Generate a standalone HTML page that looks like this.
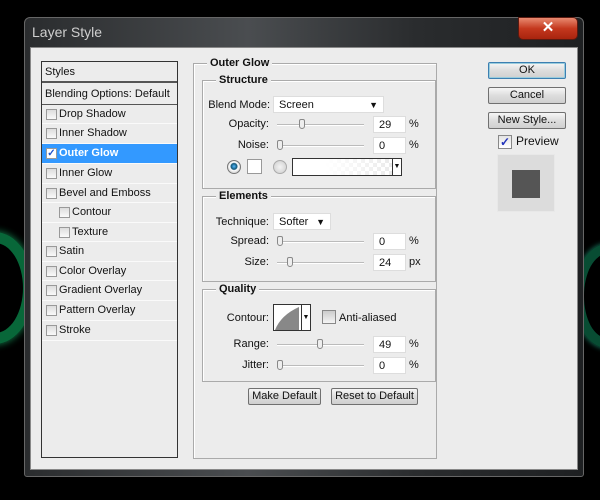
<!DOCTYPE html>
<html><head><style>
*{margin:0;padding:0;box-sizing:border-box}
body{width:600px;height:500px;background:#000;position:relative;overflow:hidden;font-family:"Liberation Sans",Tahoma,sans-serif;font-size:11px;color:#111}
.a{position:absolute}
.glowL{left:-44px;top:232px;width:78px;height:112px;border-radius:50%;border:11px solid #0a7a44;box-shadow:0 0 8px #1a9f60;opacity:.85}
.glowR{left:574px;top:244px;width:66px;height:104px;border-radius:50%;border:10px solid #0a5f40;box-shadow:0 0 6px #2a8;opacity:.8}
.frame{left:24px;top:17px;width:560px;height:460px;background:linear-gradient(90deg,#2a2c2e,#4a4d50 40%,#2a2c2e 70%,#1e2022);border:1px solid #666;border-radius:6px 6px 3px 3px}
.client{left:30px;top:47px;width:548px;height:423px;background:#ececec;border:1px solid #888}
.title{left:32px;top:24px;font-size:14px;color:#cfcfcf;font-family:"Liberation Sans",sans-serif}
.close{left:518px;top:17px;width:60px;height:23px;background:linear-gradient(#e88a70,#c4381e 50%,#a8240e);border:1px solid #5a1a10;border-radius:0 5px 5px 5px;color:#fff;text-align:center;font-weight:bold;font-size:15px;line-height:20px}
.list{left:41px;top:61px;width:137px;height:397px;border:1px solid #333;background:#ececec}
.row{position:absolute;left:0;width:135px;height:19px;border-bottom:1px solid #fafafa;line-height:18px;padding-left:17px}
.cb{position:absolute;width:11px;height:11px;border:1px solid #999;background:linear-gradient(#ddd,#fafafa);top:4px}
.fs{border:1px solid #aaa;box-shadow:1px 1px 0 #fff inset}
.lg{position:absolute;background:#ececec;font-weight:bold;padding:0 3px;font-size:11px}
.in{position:absolute;background:#fff;border:1px solid #ddd;height:17px;padding-left:5px;line-height:17px;font-size:11px}
.lbl{position:absolute;text-align:right;font-size:11px}
.sl{position:absolute;height:2px;background:#bbb;border-bottom:1px solid #fff}
.th{position:absolute;width:6px;height:10px;border:1px solid #888;background:#eee;border-radius:2px 2px 3px 3px;top:-5px}
.btn{position:absolute;border:1px solid #707070;border-radius:2px;background:linear-gradient(#f6f6f6,#ddd 50%,#cfcfcf);text-align:center;font-size:11px;line-height:15px}
</style></head><body>
<div class="a glowL"></div><div class="a glowR"></div>
<div class="a frame"></div>
<div class="a title">Layer Style</div>
<div class="a close">✕</div>
<div class="a client"></div>

<div class="a list">
 <div class="row" style="top:0;height:21px;padding-left:3px;border-bottom:2px solid #555;line-height:20px">Styles</div>
 <div class="row" style="top:23px;height:20px;padding-left:3px;border-bottom:1px solid #555;line-height:19px">Blending Options: Default</div>
 <div class="row" style="top:43px"><span class="cb" style="left:4px"></span>Drop Shadow</div>
 <div class="row" style="top:62px;height:20px"><span class="cb" style="left:4px"></span>Inner Shadow</div>
 <div class="row" style="top:82px;background:#3399ff;color:#fff;font-weight:bold;height:20px"><span class="cb" style="left:4px;background:#fff;color:#25c;font-size:10px;line-height:9px;font-weight:bold;text-align:center">✓</span>Outer Glow</div>
 <div class="row" style="top:102px;height:20px"><span class="cb" style="left:4px"></span>Inner Glow</div>
 <div class="row" style="top:122px"><span class="cb" style="left:4px"></span>Bevel and Emboss</div>
 <div class="row" style="top:141px;padding-left:30px;height:20px"><span class="cb" style="left:17px"></span>Contour</div>
 <div class="row" style="top:161px;padding-left:30px"><span class="cb" style="left:17px"></span>Texture</div>
 <div class="row" style="top:180px;height:20px"><span class="cb" style="left:4px"></span>Satin</div>
 <div class="row" style="top:200px"><span class="cb" style="left:4px"></span>Color Overlay</div>
 <div class="row" style="top:219px;height:20px"><span class="cb" style="left:4px"></span>Gradient Overlay</div>
 <div class="row" style="top:239px;height:20px"><span class="cb" style="left:4px"></span>Pattern Overlay</div>
 <div class="row" style="top:259px;height:20px"><span class="cb" style="left:4px"></span>Stroke</div>
</div>

<div class="a fs" style="left:193px;top:63px;width:244px;height:396px"></div>
<div class="lg" style="left:207px;top:57px">Outer Glow</div>

<div class="a fs" style="left:202px;top:80px;width:234px;height:109px"></div>
<div class="lg" style="left:216px;top:74px">Structure</div>
<div class="lbl" style="left:200px;top:99px;width:70px">Blend Mode:</div>
<div class="in" style="left:273px;top:96px;width:111px">Screen<span style="position:absolute;right:5px;top:0;font-size:9px">▼</span></div>
<div class="lbl" style="left:200px;top:118px;width:69px">Opacity:</div>
<div class="sl" style="left:277px;top:124px;width:87px"><div class="th" style="left:22px"></div></div>
<div class="in" style="left:373px;top:116px;width:33px">29</div><div class="lbl" style="left:409px;top:118px">%</div>
<div class="lbl" style="left:200px;top:139px;width:69px">Noise:</div>
<div class="sl" style="left:277px;top:145px;width:87px"><div class="th" style="left:0"></div></div>
<div class="in" style="left:373px;top:137px;width:33px">0</div><div class="lbl" style="left:409px;top:139px">%</div>
<div class="a" style="left:227px;top:160px;width:14px;height:14px;border-radius:50%;border:1px solid #777;background:radial-gradient(circle at 50% 45%,#5bf 0,#157 3px,#fff 4px,#ddd 6px)"></div>
<div class="a" style="left:247px;top:159px;width:15px;height:15px;background:#fff;border:1px solid #999"></div>
<div class="a" style="left:273px;top:160px;width:14px;height:14px;border-radius:50%;border:1px solid #aaa;background:radial-gradient(#f4f4f4,#ccc)"></div>
<div class="a" style="left:292px;top:158px;width:110px;height:18px;border:1px solid #333;background:linear-gradient(90deg,#fff 30%,rgba(255,255,255,0)),repeating-conic-gradient(#e8e8e8 0 25%,#fff 0 50%) 0 0/8px 8px"></div>
<div class="a" style="left:392px;top:159px;width:9px;height:16px;background:#fff;border-left:1px solid #333;font-size:7px;text-align:center;line-height:16px">▼</div>

<div class="a fs" style="left:202px;top:196px;width:234px;height:86px"></div>
<div class="lg" style="left:216px;top:190px">Elements</div>
<div class="lbl" style="left:200px;top:216px;width:69px">Technique:</div>
<div class="in" style="left:273px;top:213px;width:58px">Softer<span style="position:absolute;right:5px;font-size:9px">▼</span></div>
<div class="lbl" style="left:200px;top:235px;width:69px">Spread:</div>
<div class="sl" style="left:277px;top:241px;width:87px"><div class="th" style="left:0"></div></div>
<div class="in" style="left:373px;top:233px;width:33px">0</div><div class="lbl" style="left:409px;top:235px">%</div>
<div class="lbl" style="left:200px;top:256px;width:69px">Size:</div>
<div class="sl" style="left:277px;top:262px;width:87px"><div class="th" style="left:10px"></div></div>
<div class="in" style="left:373px;top:254px;width:33px">24</div><div class="lbl" style="left:409px;top:256px">px</div>

<div class="a fs" style="left:202px;top:289px;width:234px;height:93px"></div>
<div class="lg" style="left:216px;top:283px">Quality</div>
<div class="lbl" style="left:200px;top:312px;width:69px">Contour:</div>
<div class="a" style="left:273px;top:304px;width:38px;height:27px;border:1px solid #333;background:#fff"><svg width="28" height="25" style="position:absolute;left:1px;top:0"><path d="M0 25 Q6 10 24 2 L24 25Z" fill="#888"/></svg><div style="position:absolute;right:0;top:0;width:9px;height:25px;border-left:1px solid #333;font-size:7px;line-height:25px;text-align:center">▼</div></div>
<div class="a" style="left:322px;top:310px;width:14px;height:14px;border:1px solid #888;background:linear-gradient(#ccc,#f4f4f4)"></div>
<div class="lbl" style="left:339px;top:312px">Anti-aliased</div>
<div class="lbl" style="left:200px;top:338px;width:69px">Range:</div>
<div class="sl" style="left:277px;top:344px;width:87px"><div class="th" style="left:40px"></div></div>
<div class="in" style="left:373px;top:336px;width:33px">49</div><div class="lbl" style="left:409px;top:338px">%</div>
<div class="lbl" style="left:200px;top:359px;width:69px">Jitter:</div>
<div class="sl" style="left:277px;top:365px;width:87px"><div class="th" style="left:0"></div></div>
<div class="in" style="left:373px;top:357px;width:33px">0</div><div class="lbl" style="left:409px;top:359px">%</div>

<div class="btn" style="left:248px;top:388px;width:73px;height:17px">Make Default</div>
<div class="btn" style="left:331px;top:388px;width:87px;height:17px">Reset to Default</div>

<div class="btn" style="left:488px;top:62px;width:78px;height:17px;border-color:#3c7fb1;box-shadow:0 0 0 1px #9cd inset">OK</div>
<div class="btn" style="left:488px;top:87px;width:78px;height:17px">Cancel</div>
<div class="btn" style="left:488px;top:112px;width:78px;height:17px">New Style...</div>
<div class="a" style="left:498px;top:135px;width:14px;height:14px;border:1px solid #888;background:linear-gradient(#e4e4e4,#fff);color:#23b;font-weight:bold;font-size:12px;line-height:13px;text-align:center">✓</div>
<div class="lbl" style="left:516px;top:134px;font-size:12px">Preview</div>
<div class="a" style="left:497px;top:154px;width:58px;height:58px;background:#dcdcdc;border:1px solid #e8e8e8"></div>
<div class="a" style="left:512px;top:170px;width:28px;height:28px;background:#555"></div>
</body></html>
